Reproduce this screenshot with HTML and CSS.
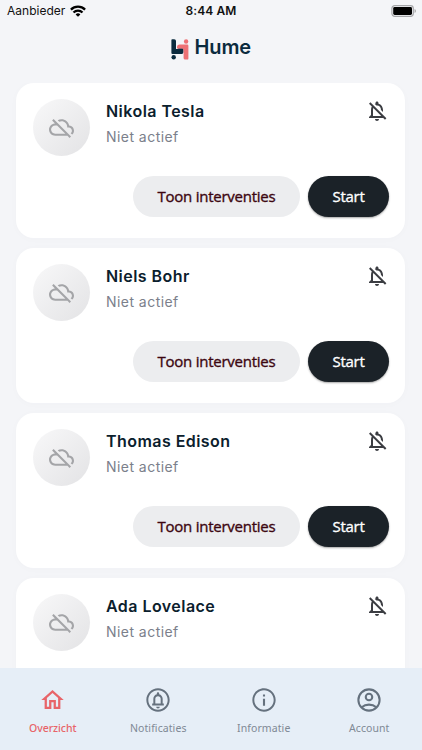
FILE: index.html
```html
<!DOCTYPE html>
<html lang="nl">
<head>
<meta charset="utf-8">
<title>Hume</title>
<link rel="stylesheet" href="styles.css">
</head>
<body>
<svg class="sprite" aria-hidden="true">
  <symbol id="cloud-off" viewBox="0 0 24 24"><path d="M24 15c0-2.64-2.05-4.78-4.65-4.96C18.67 6.59 15.64 4 12 4c-1.33 0-2.57.36-3.65.97l1.49 1.49C10.51 6.17 11.23 6 12 6c3.04 0 5.5 2.46 5.5 5.5v.5H19c1.66 0 3 1.34 3 3 0 .99-.48 1.85-1.21 2.4l1.41 1.41c1.09-.92 1.8-2.27 1.8-3.81zM4.41 3.86L3 5.27l2.77 2.77h-.42C2.34 8.36 0 10.91 0 14c0 3.31 2.69 6 6 6h11.73l2 2 1.41-1.41L4.41 3.86zM6 18c-2.21 0-4-1.79-4-4s1.79-4 4-4h1.73l8 8H6z"/></symbol>
  <symbol id="bell-off" viewBox="0 0 24 24"><path d="M12 22c1.1 0 2-.9 2-2h-4c0 1.1.9 2 2 2zm0-15.5c2.49 0 4 2.02 4 4.5v.1l2 2V11c0-3.07-1.63-5.64-4.5-6.32V4c0-.83-.67-1.5-1.5-1.5s-1.5.67-1.5 1.5v.68c-.24.06-.47.15-.69.23l1.64 1.64c.18-.02.36-.05.55-.05zM5.41 3.35L4 4.76l2.81 2.81C6.29 8.57 6 9.74 6 11v5l-2 2v1h14.24l1.74 1.74 1.41-1.41L5.41 3.35zM16 17H8v-6c0-.68.12-1.32.34-1.9L16 16.76V17z"/></symbol>
</svg>
<div class="screen">
  <div class="status">
    <div class="carrier"><span>Aanbieder</span>
      <svg class="wifi" viewBox="0 0 16 12" fill="none" stroke="#000" stroke-width="2.3"><path d="M.9 4.600a10.200 10.200 0 0 1 14.200 0M3.500 7.500a6.400 6.400 0 0 1 9 0"/><path d="M8 11.800 5.600 9.400a3.400 3.400 0 0 1 4.800 0z" fill="#000" stroke="none"/></svg>
    </div>
    <div class="time">8:44 AM</div>
    <div class="power"><svg class="battery" viewBox="0 0 26 12"><rect x=".9" y=".7" width="21.400" height="10.600" rx="2.800" fill="#f4f5f8" stroke="#a5a6a9" stroke-width="1.200"/><rect x="2.200" y="2" width="18.800" height="8" rx="1.400"/><path d="M23.600 4v4c1.600-.6 1.600-3.400 0-4z" fill="#999"/></svg></div>
  </div>
  <header class="brand">
    <svg class="logo" viewBox="0 0 18 21"><path fill="#0b2b3e" d="M1.200.3h2q1.800 0 1.800 1.800v7.900h1.500l1-.8h5v3.200q0 2.600-2.600 2.600H1.500Q.4 15 .4 13.900V1.100Q.4.3 1.200.3z"/><circle cx="2.700" cy="18.300" r="2.200" fill="#0b2b3e"/><path fill="#ee7175" d="M6 9.500V8.400q0-2.800 2.800-2.800h7.400q1.200 0 1.200 1.200v12.600q0 1.200-1.200 1.200h-2.100q-1.500 0-1.500-1.500V11q0-1.500-1.500-1.500z"/><circle cx="15.100" cy="2.500" r="2.200" fill="#ee7175"/></svg>
    <span>Hume</span>
  </header>
  <main class="list">
    <article class="card">
      <div class="person"><div class="avatar"><svg><use href="#cloud-off"/></svg></div><div class="info"><h2>Nikola Tesla</h2><p>Niet actief</p></div><svg class="mute"><use href="#bell-off"/></svg></div>
      <div class="actions"><button class="secondary">Toon interventies</button><button class="primary">Start</button></div>
    </article>
    <article class="card">
      <div class="person"><div class="avatar"><svg><use href="#cloud-off"/></svg></div><div class="info"><h2>Niels Bohr</h2><p>Niet actief</p></div><svg class="mute"><use href="#bell-off"/></svg></div>
      <div class="actions"><button class="secondary">Toon interventies</button><button class="primary">Start</button></div>
    </article>
    <article class="card">
      <div class="person"><div class="avatar"><svg><use href="#cloud-off"/></svg></div><div class="info"><h2>Thomas Edison</h2><p>Niet actief</p></div><svg class="mute"><use href="#bell-off"/></svg></div>
      <div class="actions"><button class="secondary">Toon interventies</button><button class="primary">Start</button></div>
    </article>
    <article class="card">
      <div class="person"><div class="avatar"><svg><use href="#cloud-off"/></svg></div><div class="info"><h2>Ada Lovelace</h2><p>Niet actief</p></div><svg class="mute"><use href="#bell-off"/></svg></div>
    </article>
  </main>
  <nav class="tabs">
    <a class="tab active"><svg viewBox="0 0 24 24"><path d="M12 5.69l5 4.5V18h-2v-6H9v6H7v-7.81l5-4.5M12 3L2 12h3v8h6v-6h2v6h6v-8h3L12 3z"/></svg><span>Overzicht</span></a>
    <a class="tab"><svg viewBox="0 0 24 24"><path d="M12 19.300c.83 0 1.500-.67 1.500-1.500h-3c0 .83.67 1.500 1.500 1.500zM12 2C6.480 2 2 6.480 2 12s4.480 10 10 10 10-4.480 10-10S17.520 2 12 2zm0 18.300c-4.580 0-8.300-3.720-8.300-8.300S7.420 3.700 12 3.700s8.300 3.720 8.300 8.300-3.720 8.300-8.300 8.300zM16 11c0-1.860-1.280-3.410-3-3.860V6.300c0-.55-.45-1-1-1s-1 .45-1 1v.84C9.280 7.590 8 9.140 8 11v4H7v1.700h10V15h-1v-4zm-1.700 4H9.700v-4c0-1.300 1-2.300 2.300-2.300s2.300 1 2.300 2.300v4z"/></svg><span>Notificaties</span></a>
    <a class="tab"><svg viewBox="0 0 24 24"><path d="M11.100 7.300h1.800v1.800h-1.800zm0 3.700h1.800v6h-1.800zM12 2C6.480 2 2 6.480 2 12s4.480 10 10 10 10-4.480 10-10S17.520 2 12 2zm0 18.300c-4.580 0-8.300-3.720-8.300-8.300S7.420 3.700 12 3.700s8.300 3.720 8.300 8.300-3.720 8.300-8.300 8.300z"/></svg><span>Informatie</span></a>
    <a class="tab"><svg viewBox="0 0 24 24" class="line"><circle cx="12" cy="12" r="9.100"/><circle cx="12" cy="9.400" r="2.800"/><path d="M5.700 18.200c3.600-3 9-3 12.600 0"/></svg><span>Account</span></a>
  </nav>
</div>
</body>
</html>
```
FILE: styles.css
```css
* { box-sizing: border-box; }
body { margin: 0; background: #f4f5f8; }
.sprite { display: none; }
.screen { width: 422px; height: 750px; display: flex; flex-direction: column; overflow: hidden; font-family: Inter, sans-serif; }
.status { flex: none; height: 22px; display: grid; grid-template-columns: 1fr auto 1fr; align-items: center; padding: 0 5px 0 7px; color: #111; }
.carrier { display: flex; align-items: center; gap: 5px; font-size: 12px; line-height: 20px; letter-spacing: .02px; }
.wifi { width: 16px; height: 12px; margin-top: -1px; }
.time { font-size: 12px; line-height: 20px; font-weight: 600; letter-spacing: .1px; margin: 0 2px 0 0; }
.power { display: flex; justify-content: flex-end; }
.battery { width: 26px; height: 12px; margin-top: -1px; }
.brand { flex: none; height: 61px; display: flex; justify-content: center; align-items: flex-start; gap: 5.5px; padding-top: 13px; }
.logo { width: 18px; height: 21px; margin-top: 4px; }
.brand span { font-size: 20px; line-height: 24px; font-weight: 600; letter-spacing: -.1px; color: #0b2b3e; }
.list { flex: 1; min-height: 0; overflow: hidden; display: flex; flex-direction: column; gap: 10px; padding: 0 17px 0 16px; }
.card { flex: none; height: 155px; border-radius: 18px; background: #fff; padding: 16px 16px 21px 17px; display: flex; flex-direction: column; justify-content: space-between; box-shadow: 0 1px 8px rgba(50, 50, 110, .02); }
.person { display: flex; align-items: flex-start; }
.avatar { width: 57px; height: 57px; border-radius: 50%; background: linear-gradient(135deg, #f8f8f9, #e3e3e5); display: grid; place-items: center; }
.avatar svg { width: 25px; height: 25px; fill: #a4a5a8; }
.info { flex: 1; padding: 1px 0 0 16px; }
.info h2 { margin: 0; font-size: 16px; line-height: 22px; font-weight: 600; letter-spacing: .45px; color: #0b202d; }
.info p { margin: 5px 0 0; font-size: 14px; line-height: 20px; letter-spacing: .45px; color: #7b808b; }
.mute { width: 24px; height: 24px; fill: #3b3d42; }
.actions { display: flex; justify-content: flex-end; gap: 8px; }
button { height: 41px; border: 0; border-radius: 21px; padding: 0 0 1px; font: 500 15px/20px "Open Sans", sans-serif; letter-spacing: -.25px; -webkit-text-stroke: .35px currentColor; }
.secondary { width: 167px; background: #ecedef; color: #3d0711; }
.primary { width: 81px; background: #1b2228; color: #fff; box-shadow: 0 1px 2px rgba(0, 0, 0, .35); }
.tabs { flex: none; height: 82px; background: #e6eef7; display: grid; grid-template-columns: repeat(4, 1fr); padding-top: 18px; }
.tab { display: flex; flex-direction: column; align-items: center; gap: 6px; color: #7f8995; font: 400 10.5px/16px "Noto Sans", sans-serif; letter-spacing: .08px; }
.tab svg { width: 28px; height: 28px; fill: #65717e; }
.tab svg.line { fill: none; stroke: #65717e; stroke-width: 1.75; }
.tab.active { color: #e86469; font-weight: 500; letter-spacing: -.05px; }
.tab.active svg { width: 27px; margin: 0 .5px; fill: #e86469; }
```
